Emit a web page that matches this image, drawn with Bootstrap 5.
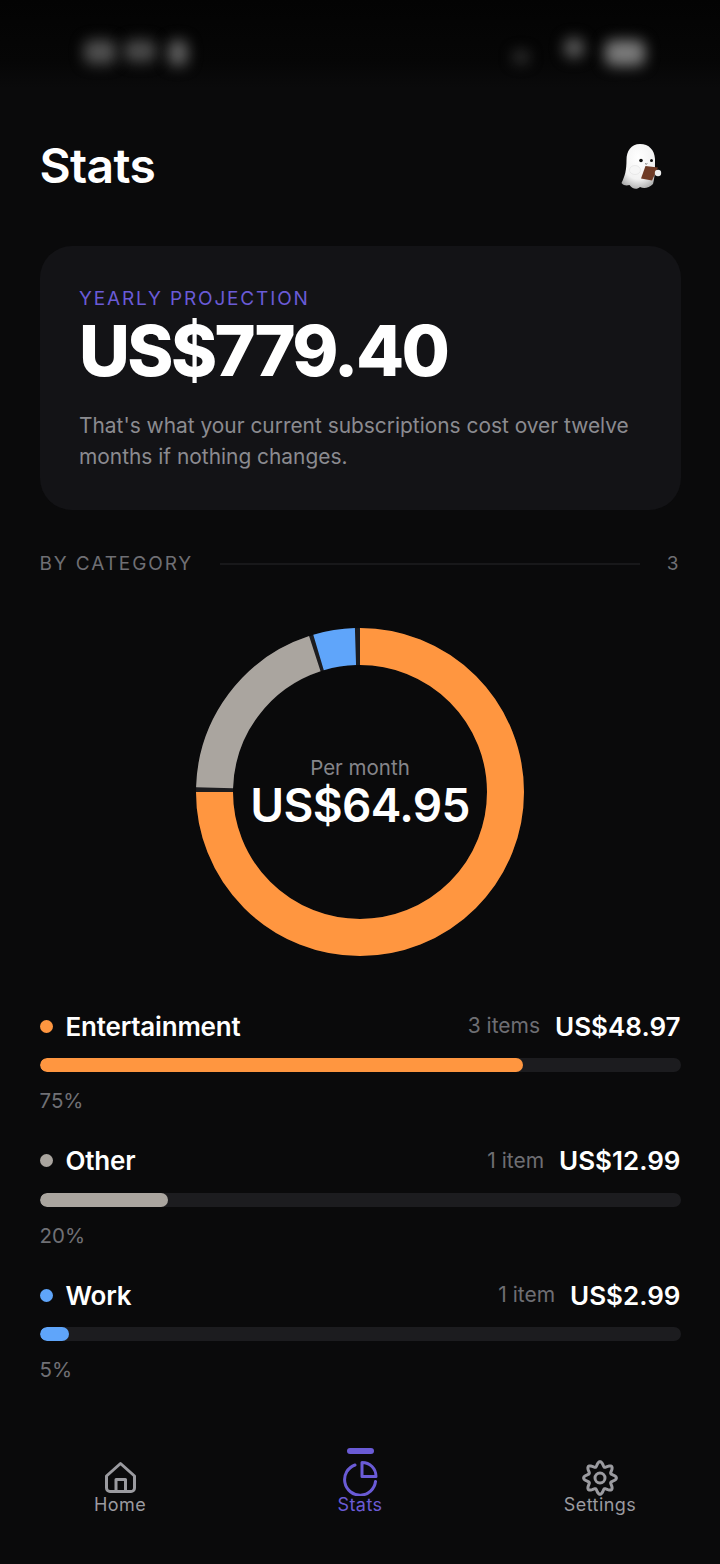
<!DOCTYPE html>
<html lang="en">
<head>
    <meta charset="UTF-8">
    <meta name="viewport" content="width=device-width, initial-scale=1.0">
    <title>Stats</title>
    <link href="https://cdn.jsdelivr.net/npm/bootstrap@5.3.0/dist/css/bootstrap.min.css" rel="stylesheet">
    <style>
        html, body { height: 100%; }
        body { background: #0a0a0b; color: #fff; font-family: Inter, "Liberation Sans", sans-serif; overflow: hidden; }
        .app-screen { width: 720px; height: 1564px; }
        /* blurred status bar */
        .status-strip { height: 88px; background: linear-gradient(#030303, #060606 70%, #0a0a0b); padding: 40px 75px 0 84px; }
        .blob { background: #505050; filter: blur(7px); border-radius: 8px; }
        .blob-t1 { width: 32px; height: 24px; }
        .blob-t2 { width: 32px; height: 22px; margin-left: 8px; background: #4a4a4a; }
        .blob-t3 { width: 20px; height: 26px; margin-left: 12px; background: #5e5e5e; }
        .blob-cell { width: 16px; height: 12px; margin-top: 11px; background: #383838; }
        .blob-wifi { width: 20px; height: 20px; background: #5a5a5a; margin-left: 35px; margin-top: -2px; }
        .blob-batt { width: 40px; height: 26px; margin-left: 21px; background: #7a7a7a; }
        .page-head { padding: 50px 58px 0 39.5px; height: 158px; }
        .page-title { font-size: 48px; font-weight: 600; letter-spacing: -.65px; line-height: 56px; margin: 0; }
        .ghost-pic { width: 42px; height: 46px; margin-top: 6px; }
        .projection { margin: 0 39.5px; height: 264px; background: #131316; border: 0; border-radius: 32px; padding: 40px 40px 40px 39.5px; }
        .proj-label { color: #6a5bd6; font-size: 19px; letter-spacing: 1.85px; line-height: 24px; margin-top: 1px; }
        .proj-amount { font-size: 70px; font-weight: 800; letter-spacing: -2.6px; line-height: 80px; margin-top: 0; }
        .proj-text { color: #8b8b90; font-size: 20.9px; line-height: 31px; margin: 19px 0 0; }
        .section-line { margin: 41px 41.5px 0 39.5px; height: 26px; color: #6f6f74; font-size: 19px; }
        .section-name { letter-spacing: 1.9px; }
        .section-rule { height: 2px; background: #18181a; margin: 0 27px; }
        .donut-wrap { width: 328px; height: 328px; margin: 51px auto 0; }
        .donut-wrap svg { display: block; transform: rotate(-90deg); }
        .donut-text { inset: 0; padding-top: 126.5px; }
        .per-month { color: #85858a; font-size: 20.5px; line-height: 25px; }
        .per-amount { font-size: 46px; font-weight: 600; letter-spacing: -.65px; line-height: 50px; }
        .cat-list { padding: 0 39.5px; margin-top: 51px; }
        .cat-row { height: 134.5px; }
        .cat-head { height: 40px; padding-bottom: 2px; }
        .cat-dot { width: 13px; height: 13px; border-radius: 50%; margin-right: 13px; }
        .cat-name { font-size: 26px; font-weight: 600; letter-spacing: -.2px; }
        .cat-items { color: #6e6e73; font-size: 21px; margin-right: 15px; }
        .cat-money { font-size: 26px; font-weight: 600; }
        .cat-track { height: 14px; background: #1c1c1f; border-radius: 7px; margin-top: 11px; }
        .cat-pct { color: #707075; font-size: 20.5px; line-height: 28px; margin-top: 15px; }
        .tab-bar { margin-top: 44.5px; }
        .tab-cell { width: 240px; color: #9b9ba0; font-size: 18px; font-weight: 400; line-height: 20px; letter-spacing: .45px; height: 70px; text-decoration: none; }
        .tab-cell svg { display: block; margin-top: 5px; margin-bottom: -1px; }
        .tab-cell.active { color: #6a5bd6; }
        .tab-mark { width: 27px; height: 6px; border-radius: 3px; background: #6a5bd6; top: -7px; left: 107px; }
    </style>
</head>
<body>
    <div class="app-screen d-flex flex-column">
        <!-- status bar, blurred in the source -->
        <div class="status-strip d-flex justify-content-between">
            <div class="d-flex align-items-start">
                <div class="blob blob-t1"></div>
                <div class="blob blob-t2"></div>
                <div class="blob blob-t3"></div>
            </div>
            <div class="d-flex align-items-start">
                <div class="blob blob-cell"></div>
                <div class="blob blob-wifi"></div>
                <div class="blob blob-batt"></div>
            </div>
        </div>

        <header class="page-head d-flex justify-content-between align-items-start">
            <h1 class="page-title">Stats</h1>
            <svg class="ghost-pic" viewBox="0 0 42 46" role="img" aria-label="Ghost">
                <defs>
                    <radialGradient id="ghostFill" cx="50%" cy="30%" r="75%">
                        <stop offset="0" stop-color="#ffffff"/>
                        <stop offset=".65" stop-color="#f2f2f2"/>
                        <stop offset="1" stop-color="#a8a8a8"/>
                    </radialGradient>
                </defs>
                <path d="M20 0C11 0 6.500 7 6.500 16 6.500 26 5 32 1.500 39 4 42 7 41.500 9.500 41 12 45 17 46 20 43 24 45 29 44 33 40 34 36 35 30 35 24L35 15C34.500 6 29 0 20 0z" fill="url(#ghostFill)"/>
                <circle cx="21" cy="16.500" r="1.800" fill="#111"/>
                <circle cx="31.500" cy="16.500" r="1.500" fill="#111"/>
                <path d="M25 19.500q1.200 1.400 2.400 0" stroke="#444" stroke-width=".7" fill="none"/>
                <ellipse cx="15" cy="26" rx="5.500" ry="4.500" fill="#f6f6f6" stroke="#d4d4d4" stroke-width=".4"/>
                <path d="M25.500 22L38 23.500 32 36.500 21 34.500z" fill="#6f3b26"/>
                <circle cx="38" cy="29" r="3.200" fill="#ececec"/>
            </svg>
        </header>

        <section class="projection card">
            <div class="proj-label">YEARLY PROJECTION</div>
            <div class="proj-amount">US$779.40</div>
            <p class="proj-text">That's what your current subscriptions cost over twelve months if nothing changes.</p>
        </section>

        <div class="section-line d-flex align-items-center">
            <span class="section-name">BY CATEGORY</span>
            <div class="section-rule flex-grow-1"></div>
            <span>3</span>
        </div>

        <div class="donut-wrap position-relative">
            <svg width="328" height="328" viewBox="0 0 328 328">
                <circle cx="164" cy="164" r="145.5" fill="none" stroke="#1c1c1f" stroke-width="37"/>
                <circle cx="164" cy="164" r="145.5" fill="none" stroke="#ff9640" stroke-width="37" pathLength="100" stroke-dasharray="75 25"/>
                <circle cx="164" cy="164" r="145.5" fill="none" stroke="#aaa59f" stroke-width="37" pathLength="100" stroke-dasharray="19.5 80.5" stroke-dashoffset="-75.47"/>
                <circle cx="164" cy="164" r="145.5" fill="none" stroke="#5fa5fa" stroke-width="37" pathLength="100" stroke-dasharray="4.1 95.9" stroke-dashoffset="-95.4"/>
            </svg>
            <div class="donut-text position-absolute text-center">
                <div class="per-month">Per month</div>
                <div class="per-amount">US$64.95</div>
            </div>
        </div>

        <div class="cat-list">
            <div class="cat-row">
                <div class="cat-head d-flex align-items-center">
                    <span class="cat-dot" style="background:#ff9640"></span>
                    <span class="cat-name flex-grow-1">Entertainment</span>
                    <span class="cat-items">3 items</span>
                    <span class="cat-money">US$48.97</span>
                </div>
                <div class="progress cat-track"><div class="progress-bar rounded-pill" style="width:75.4%;background:#ff9640"></div></div>
                <div class="cat-pct">75%</div>
            </div>
            <div class="cat-row">
                <div class="cat-head d-flex align-items-center">
                    <span class="cat-dot" style="background:#aaa59f"></span>
                    <span class="cat-name flex-grow-1">Other</span>
                    <span class="cat-items">1 item</span>
                    <span class="cat-money">US$12.99</span>
                </div>
                <div class="progress cat-track"><div class="progress-bar rounded-pill" style="width:20%;background:#aaa59f"></div></div>
                <div class="cat-pct">20%</div>
            </div>
            <div class="cat-row">
                <div class="cat-head d-flex align-items-center">
                    <span class="cat-dot" style="background:#5fa5fa"></span>
                    <span class="cat-name flex-grow-1">Work</span>
                    <span class="cat-items">1 item</span>
                    <span class="cat-money">US$2.99</span>
                </div>
                <div class="progress cat-track"><div class="progress-bar rounded-pill" style="width:4.6%;background:#5fa5fa"></div></div>
                <div class="cat-pct">5%</div>
            </div>
        </div>

        <nav class="tab-bar d-flex">
            <a class="tab-cell d-flex flex-column align-items-center position-relative" href="#">
                <svg width="36" height="36" viewBox="0 0 36 36" fill="none" stroke="#9b9ba0" stroke-width="3" stroke-linejoin="round">
                    <path d="M4.500 16L18.500 3.500 32.500 16V28A3.500 3.500 0 0 1 29 31.500H8A3.500 3.500 0 0 1 4.500 28z"/>
                    <path d="M14 31.500V19.500H23.500V31.500"/>
                </svg>
                <span>Home</span>
            </a>
            <a class="tab-cell active d-flex flex-column align-items-center position-relative" href="#">
                <span class="tab-mark position-absolute"></span>
                <svg width="36" height="36" viewBox="0 0 36 36" fill="none" stroke="#6a5bd6" stroke-width="3" stroke-linejoin="round" stroke-linecap="round">
                    <path d="M13 5A15.500 15.500 0 1 0 33.500 21.500"/>
                    <path d="M20 2.500V16.500H34C34 8.500 28 2.500 20 2.500z"/>
                </svg>
                <span>Stats</span>
            </a>
            <a class="tab-cell d-flex flex-column align-items-center position-relative" href="#">
                <svg width="36" height="36" viewBox="0 0 36 36" fill="none" stroke="#9b9ba0" stroke-width="3" stroke-linejoin="round">
                    <circle cx="18" cy="18" r="5"/>
                    <path id="gear-outline"/>
                </svg>
                <span>Settings</span>
            </a>
        </nav>
    </div>

    <script src="https://cdn.jsdelivr.net/npm/bootstrap@5.3.0/dist/js/bootstrap.bundle.min.js"></script>
    <script>
        // gear outline: eight teeth around the centre
        const points = [];
        for (let i = 0; i < 96; i++) {
            const angle = i / 96 * Math.PI * 2;
            const radius = 14 + 2.4 * Math.cos(angle * 8);
            points.push((18 + radius * Math.sin(angle)).toFixed(2) + ' ' + (18 - radius * Math.cos(angle)).toFixed(2));
        }
        document.getElementById('gear-outline').setAttribute('d', 'M' + points.join('L') + 'z');
    </script>
</body>
</html>
